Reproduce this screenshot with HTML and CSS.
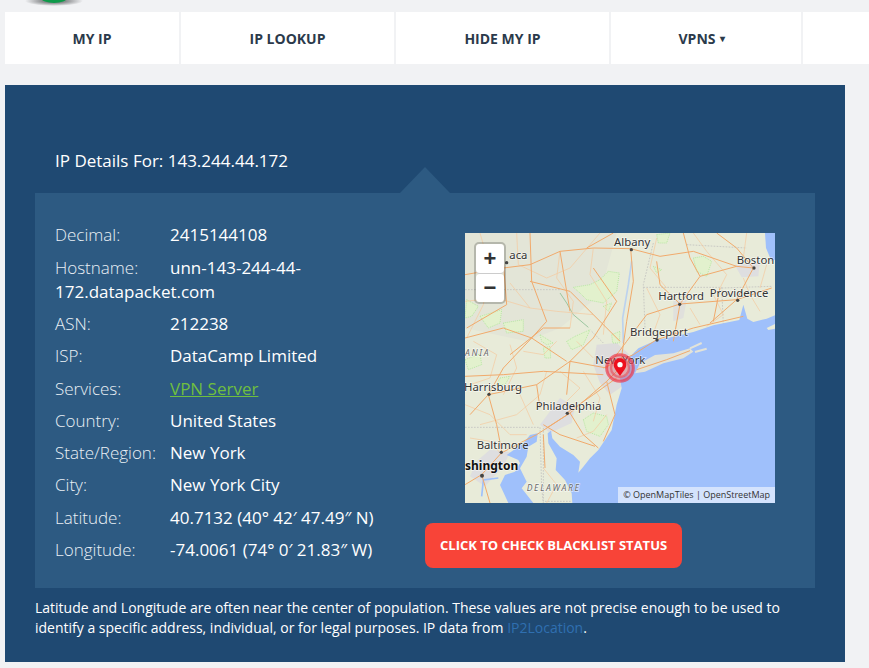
FILE: index.html
```html
<!DOCTYPE html>
<html lang="en">
<head>
    <title>IP Details</title>
    <link rel="stylesheet" href="styles.css">
</head>
<body>
    <div class="top-strip">
        <svg class="logo-peek" width="60" height="12" viewBox="0 0 60 12">
            <defs>
                <radialGradient id="logoShadow">
                    <stop offset="0.4" stop-color="#8a8c8e"/>
                    <stop offset="1" stop-color="#f1f2f4"/>
                </radialGradient>
            </defs>
            <ellipse cx="30" cy="1" rx="29" ry="5" fill="url(#logoShadow)"/>
            <ellipse cx="30" cy="-2" rx="13" ry="5" fill="#0f9a4a"/>
        </svg>
    </div>

    <nav class="main-nav">
        <a class="nav-item nav-myip" href="#">MY IP</a>
        <a class="nav-item nav-lookup" href="#">IP LOOKUP</a>
        <a class="nav-item nav-hide" href="#">HIDE MY IP</a>
        <a class="nav-item nav-vpns" href="#">VPNS <span class="caret">&#9662;</span></a>
        <a class="nav-item nav-rest" href="#"></a>
    </nav>

    <section class="panel">
        <h2 class="panel-title">IP Details For: 143.244.44.172</h2>
        <div class="details">
            <div class="details-left">
                <p class="row"><span class="label">Decimal:</span>2415144108</p>
                <p class="row"><span class="label">Hostname:</span>unn-143-244-44-172.datapacket.com</p>
                <p class="row"><span class="label">ASN:</span>212238</p>
                <p class="row"><span class="label">ISP:</span>DataCamp Limited</p>
                <p class="row"><span class="label">Services:</span><a class="vpn-link" href="#">VPN Server</a></p>
                <p class="row"><span class="label">Country:</span>United States</p>
                <p class="row"><span class="label">State/Region:</span>New York</p>
                <p class="row"><span class="label">City:</span>New York City</p>
                <p class="row"><span class="label">Latitude:</span>40.7132 (40° 42′ 47.49″ N)</p>
                <p class="row"><span class="label">Longitude:</span>-74.0061 (74° 0′ 21.83″ W)</p>
            </div>
            <div class="details-right">
                <div class="map">
                    <svg class="map-art" width="310" height="270" viewBox="15 15 930 810">
                        <rect x="15" y="15" width="930" height="810" fill="#e8ebd9"/>
                        <!-- hill shading and built up areas -->
                        <path d="M15 15H470L420 200L300 300L200 340L15 300Z" fill="#e3e5d7"/>
                        <path d="M410 350L470 345L530 400L500 450L480 480L450 500L420 465L400 410Z" fill="#dddcdc"/>
                        <path d="M240 590L300 510L345 535L335 585L270 615Z" fill="#dedee0"/>
                        <path d="M90 665L150 672L130 715L75 775L30 745L50 700Z" fill="#dedee0"/>
                        <path d="M825 112L900 102L895 145L845 148Z" fill="#dedee0"/>
                        <path d="M640 215L680 215L670 270L640 280Z" fill="#e0e0dc"/>
                        <!-- parks -->
                        <g fill="#e2f1cd" stroke="#aee69a" stroke-width="2.5" stroke-dasharray="3 3">
                            <path d="M340 178L390 170L420 155L445 130L478 135L470 190L430 225L380 215L360 195Z"/>
                            <path d="M700 90L730 85L755 100L740 145L710 130Z"/>
                            <path d="M320 340L345 325L390 305L370 350L335 365Z"/>
                            <path d="M240 320L280 345L260 350L245 340Z"/>
                            <path d="M60 265L125 245L120 285L85 300Z"/>
                            <path d="M130 285L190 275L190 310L140 315Z"/>
                            <path d="M370 575L400 555L440 565L445 590L420 625L380 610Z"/>
                            <path d="M590 20L630 15L620 45L595 45Z"/>
                            <path d="M15 395L60 378L65 410L25 425Z"/>
                            <path d="M250 360L270 355L272 390L255 390Z"/>
                            <path d="M455 320L480 310L478 345L458 345Z"/>
                            <path d="M20 215L55 235L35 265L15 270Z"/>
                            <path d="M120 450L150 445L135 470L110 470Z"/>
                            <path d="M580 115L605 125L590 135Z"/>
                            <path d="M430 235L455 225L445 250Z"/>
                        </g>
                        <!-- state lines -->
                        <path d="M15 185H300M580 45L550 170L555 300M550 178H785L790 290M785 180L935 175M15 598H240L245 780L250 825M680 50L860 60M395 310L430 345M250 600L250 820H335" fill="none" stroke="#c9c9c4" stroke-width="3" stroke-dasharray="5 4"/>
                        <path d="M300 195L320 225L340 260L385 298" fill="none" stroke="#9cc6a0" stroke-width="3"/>
                        <!-- water -->
                        <g fill="#9fc0fb">
                            <path d="M915 15H945V95L935 100L918 60Z"/>
                            <path d="M945 262L920 272L880 282L862 272L850 230L838 276L760 292L700 312L640 326L590 336L535 361L510 386L505 440L480 450L485 481L470 530L455 606L435 636L415 666L390 691L370 716L355 734L360 701L340 681L300 656L277 631L273 608L263 616L265 646L290 691L287 726L315 756L335 796L337 825H945Z"/>
                            <path d="M233 616L210 621L190 646L140 681L175 696L180 706L165 731L135 741L120 771L145 825H220L185 781L200 761L180 721L200 686L205 656L230 641Z"/>
                        </g>
                        <path d="M115 750L70 756L65 805" fill="none" stroke="#9fc0fb" stroke-width="5"/>
                        <path d="M540 406L585 381L640 376L690 361L700 371L670 391L610 406L555 431L525 436Z" fill="#e3e3d8"/>
                        <path d="M690 361L725 345M705 372L740 362" fill="none" stroke="#e3e3d8" stroke-width="6"/>
                        <path d="M920 300L945 288V302L925 306Z" fill="#e8ebd9"/>
                        <path d="M515 100L505 170L488 270L490 345" fill="none" stroke="#bcd2ee" stroke-width="5"/>
                        <!-- minor roads -->
                        <g fill="none" stroke="#f4cba2" stroke-width="2.2">
                            <path d="M60 15L90 120L70 230L20 330M170 15L175 110L260 150L330 120L420 15"/>
                            <path d="M300 70L290 150L340 220L330 300M400 60L390 140L440 220L430 320"/>
                            <path d="M150 165L210 240L290 250L400 260M15 220L110 210L210 240"/>
                            <path d="M590 30L570 120L620 180M700 15L740 70L800 140L780 180M860 15L850 90"/>
                            <path d="M560 180L600 260L575 330M690 240L720 290M760 200L790 260L740 295"/>
                            <path d="M850 150L870 200L900 250M920 110L900 180"/>
                            <path d="M40 340L110 380L90 450L30 470M150 350L170 420L130 500"/>
                            <path d="M190 370L250 380L290 340M260 430L240 500L170 560L60 590"/>
                            <path d="M300 430L360 480L300 540M350 340L400 390M370 430L420 510L400 580"/>
                            <path d="M15 530L90 560L150 620L200 620M180 500L220 590"/>
                            <path d="M30 630L90 640L125 680M250 720L290 770L260 825"/>
                            <path d="M350 630L400 610L440 560"/>
                        </g>
                        <!-- main roads -->
                        <g fill="none" stroke="#f1aa6c" stroke-width="3">
                            <path d="M15 140L130 120L210 110L300 70L400 60L512 62L600 85L700 70L830 115L880 120"/>
                            <path d="M512 62L520 160L500 280L490 350L480 420L440 460L330 555L230 620L190 640L124 675L65 740"/>
                            <path d="M210 15L215 160L260 280L215 330L130 420L85 500L30 560"/>
                            <path d="M130 100L140 230L20 300M210 160L330 190L400 260L480 340"/>
                            <path d="M15 445L130 440L250 430L430 440M85 500L230 470L330 400L440 420"/>
                            <path d="M85 500L110 590L125 670M320 555L400 500L470 450"/>
                            <path d="M330 555L370 620L415 660M330 555L260 600"/>
                            <path d="M660 228L640 340M660 228L720 145L830 115M660 228L560 260L500 340L440 420"/>
                            <path d="M660 228L830 215L880 120M830 215L750 285M830 215L935 180M880 120L830 60L770 15"/>
                            <path d="M590 335L700 300L850 265M590 335L520 380L430 420"/>
                            <path d="M530 425L620 395L690 368M400 120L470 220L400 330L330 400L320 500"/>
                            <path d="M590 100L600 170L660 228M720 145L690 90L670 15M780 180L760 280"/>
                            <path d="M65 740L90 825M65 740L15 770M250 620L255 720"/>
                            <path d="M150 380L250 300L330 300M230 470L240 540M440 460L465 560L430 640"/>
                            <path d="M15 330L130 300L215 330L320 400M330 250L300 70M380 60L460 15"/>
                            <path d="M250 590L300 620L405 655"/>
                        </g>
                        <!-- labels -->
                        <g class="map-labels">
                            <text x="148" y="94">aca</text>
                            <text x="462" y="55">Albany</text>
                            <text x="830" y="109">Boston</text>
                            <text x="595" y="217">Hartford</text>
                            <text x="749" y="206">Providence</text>
                            <text x="510" y="324">Bridgeport</text>
                            <text x="406" y="409">New York</text>
                            <text x="12" y="489">Harrisburg</text>
                            <text x="227" y="545">Philadelphia</text>
                            <text x="50" y="662">Baltimore</text>
                            <text class="label-big" x="15" y="727">shington</text>
                            <text class="label-state" x="200" y="790">DELAWARE</text>
                            <text class="label-state" x="15" y="385">ANIA</text>
                        </g>
                        <g fill="#444">
                            <circle cx="140" cy="104" r="5"/>
                            <circle cx="514" cy="65" r="5"/>
                            <circle cx="882" cy="120" r="5"/>
                            <circle cx="659" cy="229" r="5"/>
                            <circle cx="833" cy="217" r="5"/>
                            <circle cx="591" cy="336" r="5"/>
                            <circle cx="87" cy="499" r="5"/>
                            <circle cx="322" cy="556" r="5"/>
                            <circle cx="124" cy="673" r="5"/>
                            <circle cx="66" cy="743" r="6"/>
                        </g>
                        <!-- marker -->
                        <circle cx="480" cy="420" r="40" fill="#e8505c" fill-opacity="0.35" stroke="#ee3344" stroke-opacity="0.65" stroke-width="9"/>
                        <circle cx="480" cy="420" r="27" fill="none" stroke="#e63a48" stroke-opacity="0.5" stroke-width="7"/>
                        <path d="M480 444C472 430 461 422 461 410A19 19 0 0 1 499 410C499 422 488 430 480 444Z" fill="#ee0f1e"/>
                        <circle cx="480" cy="410" r="8" fill="#fff"/>
                    </svg>
                    <div class="zoom-box">
                        <span class="zoom-btn">+</span>
                        <span class="zoom-btn">&minus;</span>
                    </div>
                    <div class="attribution">© OpenMapTiles | OpenStreetMap</div>
                </div>
                <a class="blacklist-btn" href="#">CLICK TO CHECK BLACKLIST STATUS</a>
            </div>
        </div>
        <p class="note">Latitude and Longitude are often near the center of population. These values are not precise enough to be used to identify a specific address, individual, or for legal purposes. IP data from <a class="note-link" href="#">IP2Location</a>.</p>
    </section>
</body>
</html>
```

FILE: styles.css
```css
body {
    margin: 0;
    background-color: #f1f2f4;
    font-family: "Open Sans", Arial, sans-serif;
    color: #ffffff;
    overflow: hidden;
}
.top-strip {
    height: 12px;
    overflow: hidden;
}
.logo-peek {
    display: block;
    margin-left: 24px;
}
.main-nav {
    display: flex;
    height: 52px;
    margin-left: 5px;
    background: #f1f2f4;
}
.nav-item {
    display: flex;
    align-items: center;
    justify-content: center;
    background: #ffffff;
    margin-right: 2px;
    color: #2b3a4b;
    font-size: 14px;
    font-weight: 700;
    text-decoration: none;
}
.nav-myip { width: 174px; }
.nav-lookup { width: 213px; }
.nav-hide { width: 213px; }
.nav-vpns {
    width: 182px;
    padding-right: 8px;
}
.nav-rest { flex: 1; margin-right: 0; }
.caret {
    margin-left: 5px;
    font-size: 10px;
}
.panel {
    position: relative;
    width: 780px;
    height: 577px;
    margin: 21px 0 0 5px;
    padding: 0 30px;
    background: #1f4972;
}
.panel-title {
    margin: 0;
    padding: 64px 0 20px 20px;
    font-size: 17px;
    font-weight: 400;
    line-height: 24px;
}
.details {
    position: relative;
    display: flex;
    height: 395px;
    background: #2d5a82;
}
.details::before {
    content: "";
    position: absolute;
    left: 365px;
    top: -26px;
    border-left: 25px solid transparent;
    border-right: 25px solid transparent;
    border-bottom: 26px solid #2d5a82;
}
.details-left {
    width: 370px;
    padding: 30.35px 0 0 20px;
}
.row {
    margin: 0 0 8.3px;
    font-size: 17px;
    line-height: 24px;
}
.label {
    display: inline-block;
    width: 115px;
    color: #eaf0f5;
    font-weight: 300;
}
.vpn-link {
    color: #6fbf3f;
}
.details-right {
    display: flex;
    flex-direction: column;
    align-items: flex-start;
    padding-top: 40px;
}
.map {
    position: relative;
    width: 310px;
    height: 270px;
    margin-left: 40px;
    overflow: hidden;
}
.map-art {
    display: block;
}
.map-labels text {
    font-family: "Noto Sans", sans-serif;
    font-size: 34px;
    fill: #333333;
    stroke: #ffffff;
    stroke-opacity: 0.6;
    stroke-width: 4px;
    paint-order: stroke;
}
.map-labels .label-big {
    font-size: 36px;
    font-weight: 700;
    fill: #111111;
}
.map-labels .label-state {
    font-size: 26px;
    font-style: italic;
    letter-spacing: 5px;
    fill: #6a6a6a;
}
.zoom-box {
    position: absolute;
    left: 9px;
    top: 9px;
    display: flex;
    flex-direction: column;
    border: 2px solid rgba(0, 0, 0, 0.2);
    border-radius: 5px;
    background-clip: padding-box;
}
.zoom-btn {
    display: flex;
    align-items: center;
    justify-content: center;
    width: 28px;
    height: 28px;
    background: #ffffff;
    border-radius: 4px;
    color: #333333;
    font-family: "Liberation Sans", Arial, sans-serif;
    font-size: 22px;
    font-weight: 700;
}
.zoom-btn:first-child {
    border-bottom: 1px solid #cccccc;
    height: 29px;
}
.attribution {
    position: absolute;
    right: 0;
    bottom: 0;
    padding: 0 5px;
    background: rgba(255, 255, 255, 0.55);
    color: #333333;
    font-size: 9px;
    line-height: 16px;
}
.blacklist-btn {
    display: block;
    margin-top: 20px;
    padding: 0 15px;
    line-height: 45px;
    background: #f84438;
    border-radius: 8px;
    color: #ffffff;
    font-size: 13px;
    font-weight: 700;
    text-decoration: none;
}
.note {
    margin: 10px 0 0;
    font-size: 14px;
    line-height: 20px;
}
.note-link {
    color: #2f6fb0;
    text-decoration: none;
}
```
